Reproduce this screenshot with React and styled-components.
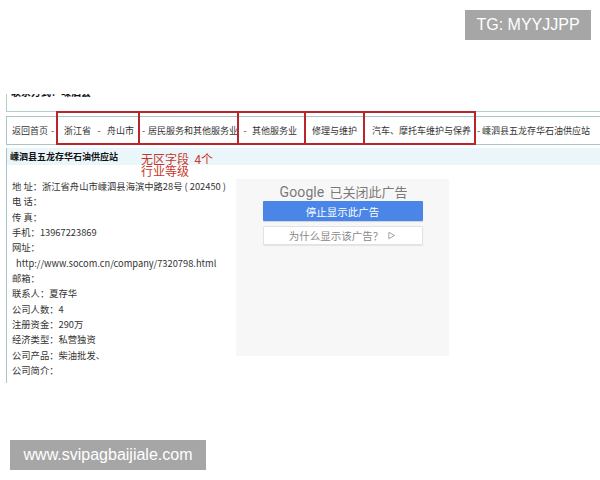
import React from "react";
import styled, { createGlobalStyle } from "styled-components";

const Global = createGlobalStyle`
  html, body { margin: 0; padding: 0; background: #fff; overflow: hidden; }
  body { width: 600px; height: 480px; position: relative; font-family: "Noto Sans CJK SC", "Liberation Sans", sans-serif; }
`;

const CJK = `"Microsoft YaHei", "Noto Sans CJK SC", "Liberation Sans", sans-serif`;

const Page = styled.div`
  padding-top: 94px;
  padding-left: 6px;
`;

const Badge = styled.div`
  position: absolute;
  left: ${(p) => p.x}px;
  top: ${(p) => p.y}px;
  width: ${(p) => p.w}px;
  height: 30px;
  background: #a6a6a6;
  color: #fff;
  font-family: "Liberation Sans", Arial, sans-serif;
  font-size: 16px;
  display: flex;
  align-items: center;
  justify-content: center;
`;

const TopBox = styled.div`
  height: 17px;
  border-left: 1px solid #b3cccc;
  border-bottom: 1px solid #b3cccc;
  overflow: hidden;
`;

const TopTitle = styled.div`
  margin-top: -9px;
  padding-left: 4px;
  font-family: ${CJK};
  font-weight: 700;
  font-size: 10px;
  line-height: 13px;
  color: #111;
`;

const Crumbs = styled.div`
  margin-top: 4px;
  height: 27px;
  border: 1px solid #a9c5c6;
  border-right: none;
  display: flex;
  align-items: center;
  padding-left: 5px;
  font-family: ${CJK};
  font-size: 9px;
  color: #333;
  white-space: nowrap;
`;

const Crumb = styled.span`
  padding-left: ${(p) => p.pl || 0}px;
`;

const Sep = styled.span`
  display: inline-block;
  width: ${(p) => p.w}px;
  text-align: center;
`;

const Group = styled.span`
  position: relative;
  display: flex;
  align-items: center;
  align-self: stretch;
  width: ${(p) => p.w}px;
  flex: none;
  &::after {
    content: "";
    position: absolute;
    left: -1px;
    right: -1px;
    top: -6px;
    bottom: -1px;
    border: 2px solid #b8262c;
    pointer-events: none;
  }
`;

const Info = styled.div`
  position: relative;
  margin-top: 3px;
  border-left: 1px solid #a9c5c6;
  height: 235px;
`;

const InfoHead = styled.div`
  height: 17px;
  background: #ebf6fb;
  display: flex;
  align-items: center;
  padding-left: 3px;
  font-family: ${CJK};
  font-size: 9px;
  font-weight: 700;
  color: #111;
`;

const Note = styled.div`
  position: absolute;
  left: 134px;
  top: 5px;
  font-family: ${CJK};
  font-size: 12px;
  line-height: 12px;
  color: #c9372c;
  white-space: pre;
`;

const InfoBody = styled.div`
  display: flex;
  align-items: flex-start;
  padding-top: 14px;
`;

const List = styled.div`
  width: 223px;
  padding-left: 5px;
  flex: none;
  box-sizing: border-box;
`;

const Row = styled.div`
  font-family: ${CJK};
  font-size: 9.3px;
  line-height: 15.35px;
  color: #333;
  white-space: nowrap;
  padding-left: ${(p) => p.indent || 0}px;
`;

const Ad = styled.div`
  margin-left: 6px;
  width: 213px;
  height: 177px;
  background: #f7f7f7;
  display: flex;
  flex-direction: column;
  align-items: center;
  padding-top: 3px;
  box-sizing: border-box;
`;

const AdTitle = styled.div`
  display: flex;
  align-items: baseline;
  gap: 5px;
  color: #7a7a7a;
  height: 18px;
  margin-left: 2px;
`;

const GoogleWord = styled.span`
  font-family: Roboto, "Open Sans", sans-serif;
  font-size: 14px;
  letter-spacing: 0.1px;
`;

const AdClosed = styled.span`
  font-family: ${CJK};
  font-size: 13px;
`;

const AdButton = styled.div`
  width: 160px;
  height: ${(p) => (p.primary ? 20 : 19)}px;
  margin-top: ${(p) => (p.primary ? 1 : 5)}px;
  box-sizing: border-box;
  display: flex;
  align-items: center;
  justify-content: center;
  gap: 4px;
  font-family: ${CJK};
  font-size: 10.5px;
  color: ${(p) => (p.primary ? "#fff" : "#888")};
  background: ${(p) => (p.primary ? "#4a86e8" : "#fff")};
  border: ${(p) => (p.primary ? "none" : "1px solid #e2e2e2")};
  border-radius: 1px;
  box-shadow: ${(p) => (p.primary ? "0 1px 1px rgba(0,0,0,0.15)" : "0 1px 1px rgba(0,0,0,0.08)")};
`;

const rows = [
  ["地 址：浙江省舟山市嵊泗县海滨中路28号 ( 202450 )"],
  ["电 话："],
  ["传 真："],
  ["手机：13967223869"],
  ["网址："],
  ["http://www.socom.cn/company/7320798.html", 4],
  ["邮箱："],
  ["联系人：夏存华"],
  ["公司人数：4"],
  ["注册资金：290万"],
  ["经济类型：私营独资"],
  ["公司产品：柴油批发、"],
  ["公司简介："],
];

export default function App() {
  return (
    <>
      <Global />
      <Badge x={465} y={10} w={126}>TG: MYYJJPP</Badge>
      <Page>
        <TopBox>
          <TopTitle>联系方式：嵊泗县</TopTitle>
        </TopBox>
        <Crumbs>
          <Crumb>返回首页</Crumb>
          <Sep w={9}>-</Sep>
          <Group w={82}>
            <Crumb pl={7}>浙江省</Crumb>
            <Sep w={16}>-</Sep>
            <Crumb>舟山市</Crumb>
          </Group>
          <Group w={99}>
            <Sep w={9}>-</Sep>
            <Crumb>居民服务和其他服务业</Crumb>
          </Group>
          <Group w={67}>
            <Sep w={14}>-</Sep>
            <Crumb>其他服务业</Crumb>
          </Group>
          <Group w={59}>
            <Crumb pl={7}>修理与维护</Crumb>
          </Group>
          <Group w={111}>
            <Crumb pl={8}>汽车、摩托车维护与保养</Crumb>
          </Group>
          <Sep w={7}>-</Sep>
          <Crumb>嵊泗县五龙存华石油供应站</Crumb>
        </Crumbs>
        <Info>
          <InfoHead>嵊泗县五龙存华石油供应站</InfoHead>
          <Note>{"无区字段  4个\n行业等级"}</Note>
          <InfoBody>
            <List>
              {rows.map(([t, indent], i) => (
                <Row key={i} indent={indent}>{t}</Row>
              ))}
            </List>
            <Ad>
              <AdTitle>
                <GoogleWord>Google</GoogleWord>
                <AdClosed>已关闭此广告</AdClosed>
              </AdTitle>
              <AdButton primary>停止显示此广告</AdButton>
              <AdButton>
                为什么显示该广告？
                <svg width="9" height="9" viewBox="0 0 10 10">
                  <path d="M2 1.5 L8.5 5 L2 8.5 Z" fill="none" stroke="#999" strokeWidth="1" strokeLinejoin="round" />
                </svg>
              </AdButton>
            </Ad>
          </InfoBody>
        </Info>
      </Page>
      <Badge x={10} y={440} w={196}>www.svipagbaijiale.com</Badge>
    </>
  );
}
